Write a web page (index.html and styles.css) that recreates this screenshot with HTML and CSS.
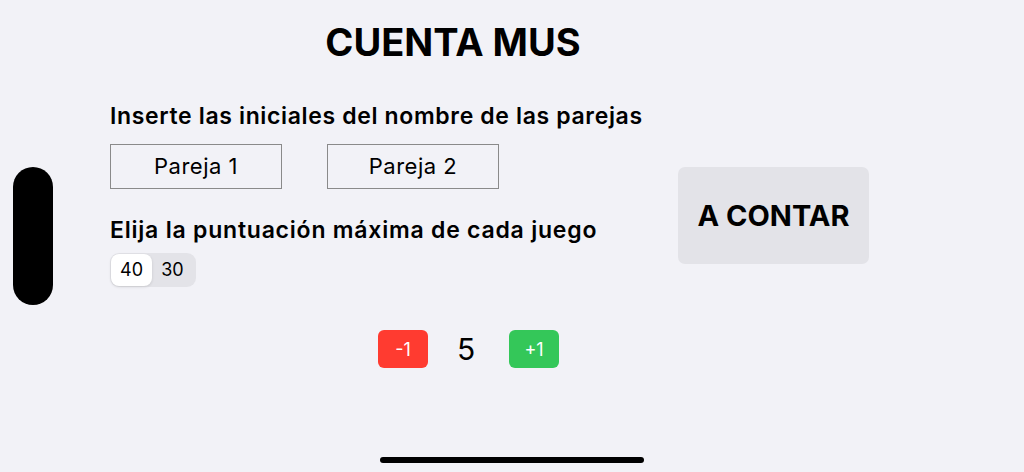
FILE: index.html
```html
<!DOCTYPE html>
<html lang="es">
<head>
    <meta charset="UTF-8">
    <meta name="viewport" content="width=device-width, initial-scale=1.0">
    <title>Cuenta Mus</title>
    <link rel="stylesheet" href="styles.css">
</head>
<body>
    <div class="screen">
        <div class="notch"></div>

        <h1 class="title">CUENTA MUS</h1>

        <div class="main">
            <div class="form">
                <p class="label">Inserte las iniciales del nombre de las parejas</p>
                <div class="fields">
                    <div class="field">Pareja 1</div>
                    <div class="field">Pareja 2</div>
                </div>

                <p class="label label-second">Elija la puntuación máxima de cada juego</p>
                <div class="segmented">
                    <span class="seg active">40</span>
                    <span class="seg">30</span>
                </div>
            </div>

            <button class="go">A CONTAR</button>
        </div>

        <div class="counter">
            <button class="step minus">-1</button>
            <span class="count">5</span>
            <button class="step plus">+1</button>
        </div>

        <div class="home-bar"></div>
    </div>
</body>
</html>
```

FILE: styles.css
```css
* {
    margin: 0;
    padding: 0;
    box-sizing: border-box;
}

body {
    font-family: 'Inter', 'Liberation Sans', sans-serif;
    background: #f2f2f7;
    color: #000;
}

.screen {
    position: relative;
    width: 1024px;
    height: 472px;
    overflow: hidden;
    padding-left: 110px;
}

/* camera housing on the left edge */
.notch {
    position: absolute;
    left: 13px;
    top: 167px;
    width: 40px;
    height: 138px;
    border-radius: 20px;
    background: #000;
}

.title {
    width: 686px;
    margin-top: 20px;
    font-size: 38px;
    line-height: 44px;
    font-weight: 700;
    text-align: center;
}

.main {
    display: flex;
    align-items: flex-start;
    gap: 35px;
    margin-top: 39px;
}

.form {
    width: 533px;
    flex-shrink: 0;
}

.label {
    font-size: 23px;
    line-height: 26px;
    font-weight: 600;
    letter-spacing: 0.65px;
    white-space: nowrap;
}

.label-second {
    margin-top: 28px;
    letter-spacing: 0.78px;
}

.fields {
    display: flex;
    gap: 45px;
    margin-top: 15px;
}

.field {
    width: 172px;
    height: 45px;
    border: 1.5px solid #8a8a8a;
    font-size: 22px;
    line-height: 42px;
    letter-spacing: 0.5px;
    text-align: center;
}

.segmented {
    display: inline-flex;
    margin-top: 10px;
    padding: 1px;
    height: 34px;
    width: 86px;
    border-radius: 9px;
    background: #e3e3e8;
}

.seg {
    width: 41px;
    height: 32px;
    line-height: 32px;
    font-size: 18px;
    text-align: center;
    border-radius: 8px;
}

.seg.active {
    background: #fff;
    box-shadow: 0 1px 3px rgba(0,0,0,0.12);
}

.go {
    margin-top: 64px;
    width: 191px;
    height: 97px;
    border: none;
    border-radius: 7px;
    background: #e3e3e8;
    font-family: inherit;
    font-size: 29px;
    font-weight: 700;
    color: #000;
}

.counter {
    display: flex;
    align-items: center;
    margin-top: 43px;
    padding-left: 268px;
}

.step {
    width: 50px;
    height: 38px;
    border: none;
    border-radius: 6px;
    font-family: inherit;
    font-size: 18px;
    color: #fff;
}

.minus {
    background: #ff3b30;
}

.plus {
    background: #34c759;
}

.count {
    width: 50px;
    margin: 0 18px 0 13px;
    font-size: 30px;
    text-align: center;
}

.home-bar {
    position: absolute;
    left: 380px;
    top: 457px;
    width: 264px;
    height: 6px;
    border-radius: 3px;
    background: #000;
}
```
